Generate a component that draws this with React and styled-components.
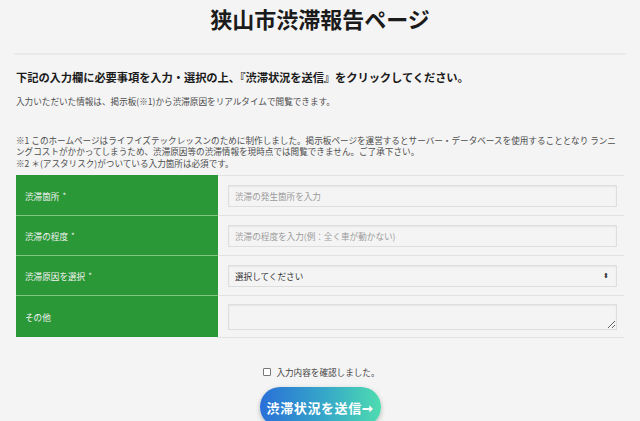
import React from 'react'
import styled, { createGlobalStyle } from 'styled-components'

const GlobalStyle = createGlobalStyle`
  html, body {
    margin: 0;
    padding: 0;
    background: #f4f4f4;
  }
  body {
    font-family: "Noto Sans CJK JP", "Noto Sans", sans-serif;
    color: #222;
  }
`

const Page = styled.div`
  width: 640px;
  height: 421px;
  overflow: hidden;
`

const Title = styled.h1`
  margin: 0;
  padding-top: 3px;
  font-size: 22px;
  line-height: 30px;
  font-weight: 700;
  text-align: center;
  color: #1b1b1b;
`

const Rule = styled.hr`
  margin: 20px 14px 0;
  border: 0;
  border-top: 2px solid #e9e9e9;
`

const Intro = styled.section`
  padding: 14px 16px 0;
`

const Lead = styled.h2`
  margin: 0;
  font-size: 11.3px;
  line-height: 16px;
  font-weight: 700;
  letter-spacing: -0.1px;
  color: #1b1b1b;
`

const Note = styled.p`
  margin: ${p => p.$gap || 0} 0 0;
  font-size: 8.6px;
  line-height: 11.6px;
  color: #4d4d4d;
`

const Table = styled.div`
  margin: 6px 16px 0;
  display: grid;
  grid-template-columns: 202px 1fr;
`

const Label = styled.div`
  display: flex;
  align-items: center;
  height: ${p => p.$tall ? 41 : 39}px;
  padding-left: 9px;
  background: #2b9838;
  border-top: 1px solid ${p => p.$first ? '#2b9838' : '#7ec67f'};
  color: #f2f2f2;
  font-size: 8.6px;
`

const Req = styled.span`
  margin-left: 3px;
  font-size: 8px;
`

const Cell = styled.div`
  display: flex;
  align-items: center;
  height: ${p => p.$tall ? 41 : 39}px;
  padding: 0 7px 0 10px;
  border-top: 1px solid #e2e2e2;
  border-bottom: ${p => p.$last ? '1px solid #e2e2e2' : '0'};
`

const fieldBase = `
  box-sizing: border-box;
  width: 100%;
  border: 1px solid #dedede;
  box-shadow: inset 0 1px 2px rgba(0, 0, 0, 0.06);
  background: #f4f4f4;
  font-family: "Noto Sans CJK JP", "Noto Sans", sans-serif;
  font-size: 8.6px;
  color: #444;
  padding: 0 6px;
  outline: none;
`

const Input = styled.input`
  ${fieldBase}
  height: 22px;
  &::placeholder {
    color: #9a9a9a;
  }
`

const SelectBox = styled.div`
  ${fieldBase}
  height: 22px;
  display: flex;
  align-items: center;
  justify-content: space-between;
  color: #333;
`

const Arrows = styled.span`
  font-size: 7px;
  color: #333;
  line-height: 1;
  margin-right: 1px;
`

const TextArea = styled.textarea`
  ${fieldBase}
  height: 26px;
  padding: 4px 6px;
  resize: vertical;
`

const Confirm = styled.label`
  display: flex;
  align-items: center;
  justify-content: center;
  gap: 5px;
  margin-top: 28px;
  margin-left: 3px;
  font-size: 8.6px;
  color: #444;
`

const Box = styled.span`
  width: 6px;
  height: 6px;
  border: 1px solid #777;
  border-radius: 1px;
  background: #fff;
`

const Actions = styled.div`
  display: flex;
  justify-content: center;
  margin-top: 9px;
`

const Send = styled.button`
  width: 121px;
  height: 40px;
  border: 0;
  border-radius: 20px;
  background: linear-gradient(90deg, #2a6fd8 0%, #36a9c8 55%, #4fdcb0 100%);
  box-shadow: 0 2px 5px rgba(0, 0, 0, 0.25);
  color: #fff;
  font-family: "Noto Sans CJK JP", "Noto Sans", sans-serif;
  font-size: 13px;
  font-weight: 700;
  letter-spacing: 0.6px;
  padding: 0;
`

const rows = [
  { label: '渋滞箇所', req: true, kind: 'input', placeholder: '渋滞の発生箇所を入力' },
  { label: '渋滞の程度', req: true, kind: 'input', placeholder: '渋滞の程度を入力(例：全く車が動かない)' },
  { label: '渋滞原因を選択', req: true, kind: 'select' },
  { label: 'その他', req: false, kind: 'textarea' },
]

export default function App() {
  return (
    <Page>
      <GlobalStyle />
      <Title>狭山市渋滞報告ページ</Title>
      <Rule />
      <Intro>
        <Lead>下記の入力欄に必要事項を入力・選択の上、『渋滞状況を送信』をクリックしてください。</Lead>
        <Note $gap="11px">入力いただいた情報は、掲示板(※1)から渋滞原因をリアルタイムで閲覧できます。</Note>
        <Note $gap="27px">
          ※1 このホームページはライフイズテックレッスンのために制作しました。掲示板ページを運営するとサーバー・データベースを使用することとなり ランニングコストがかかってしまうため、渋滞原因等の渋滞情報を現時点では閲覧できません。ご了承下さい。
          <br />
          ※2 ＊(アスタリスク)がついている入力箇所は必須です。
        </Note>
      </Intro>
      <Table>
        {rows.map((r, i) => {
          const last = i === rows.length - 1
          return (
            <React.Fragment key={r.label}>
              <Label $first={i === 0} $tall={last}>
                {r.label}
                {r.req && <Req>*</Req>}
              </Label>
              <Cell $tall={last} $last={last}>
                {r.kind === 'input' && <Input placeholder={r.placeholder} />}
                {r.kind === 'select' && (
                  <SelectBox>
                    選択してください
                    <Arrows>⬍</Arrows>
                  </SelectBox>
                )}
                {r.kind === 'textarea' && <TextArea />}
              </Cell>
            </React.Fragment>
          )
        })}
      </Table>
      <Confirm>
        <Box />
        入力内容を確認しました。
      </Confirm>
      <Actions>
        <Send>渋滞状況を送信➞</Send>
      </Actions>
    </Page>
  )
}
